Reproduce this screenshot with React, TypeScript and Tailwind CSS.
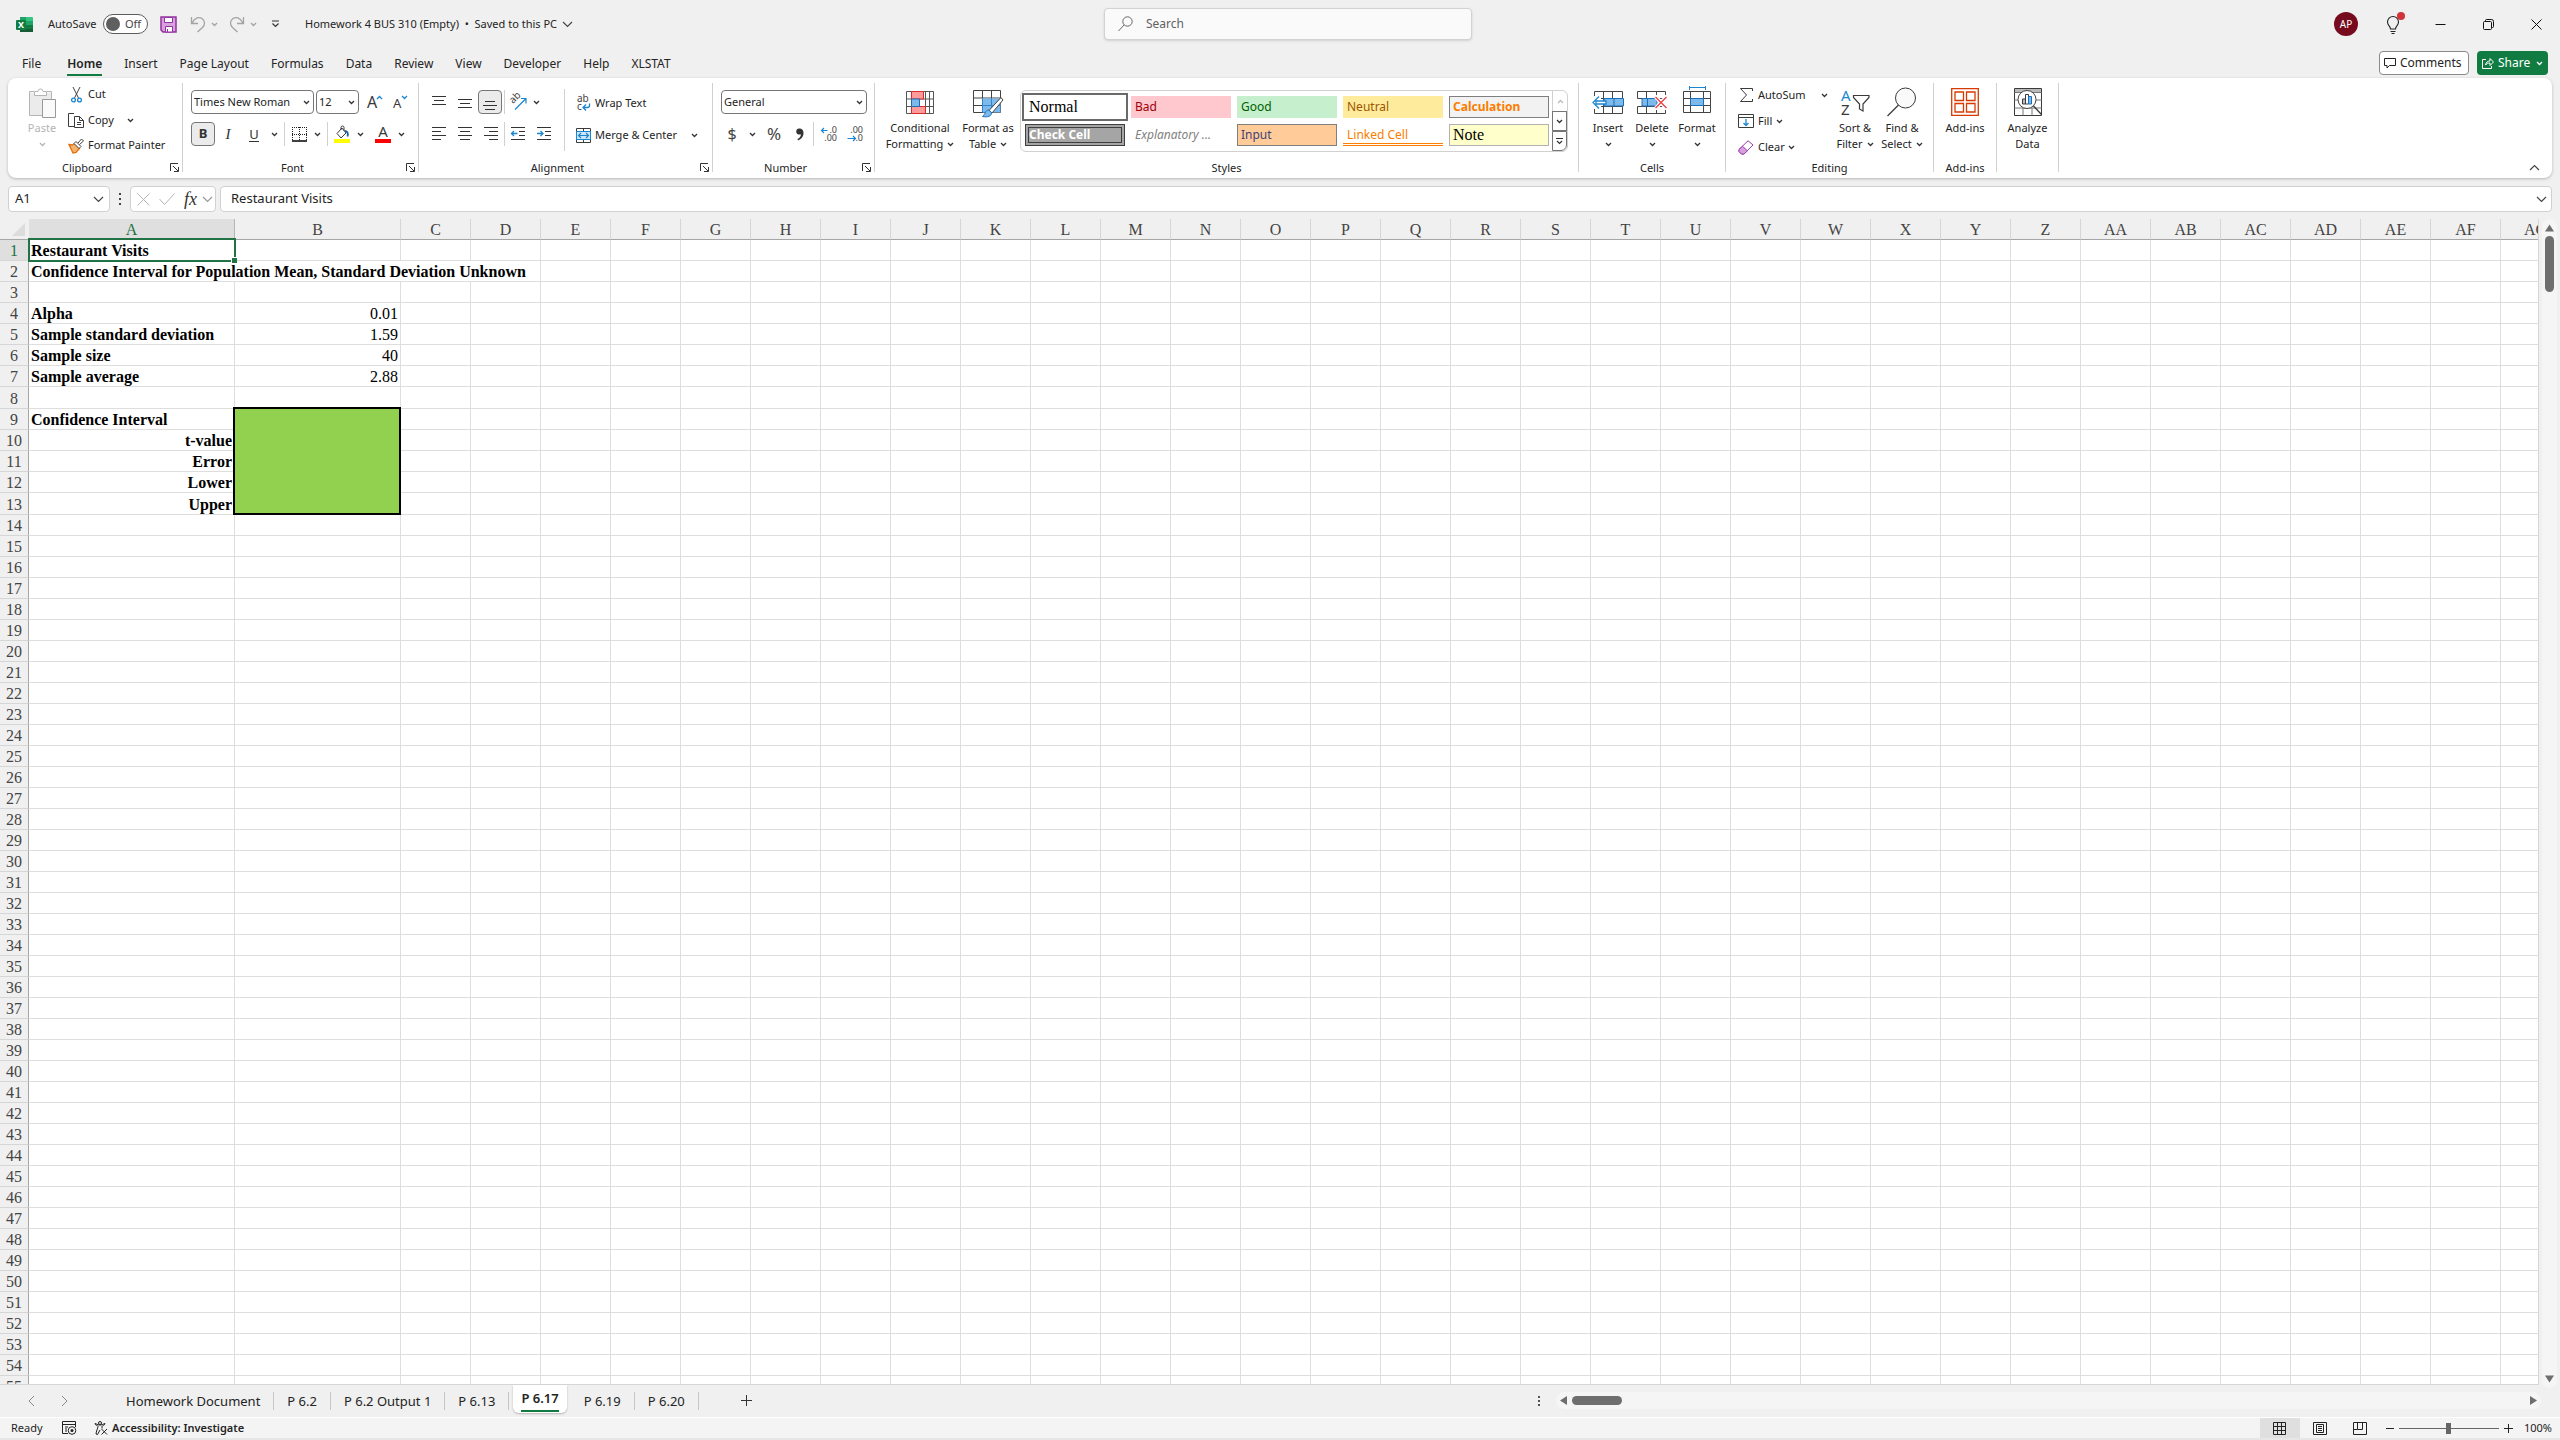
import React from 'react';

interface CellData {
  text: string;
  bold?: boolean;
  right?: boolean;
  span?: number;
}

const TABS = ['File', 'Home', 'Insert', 'Page Layout', 'Formulas', 'Data', 'Review', 'View', 'Developer', 'Help', 'XLSTAT'];

const COLUMNS = Array.from({ length: 33 }, (_, i) =>
  i < 26 ? String.fromCharCode(65 + i) : 'A' + String.fromCharCode(65 + i - 26)
);
const ROWS = Array.from({ length: 55 }, (_, i) => i + 1);
const TALL_ROWS = [8, 13];
const INPUT_ROWS = [9, 10, 11, 12, 13];

const CELLS: Record<string, CellData> = {
  A1: { text: 'Restaurant Visits', bold: true },
  A2: { text: 'Confidence Interval for Population Mean, Standard Deviation Unknown', bold: true, span: 4 },
  A4: { text: 'Alpha', bold: true },
  B4: { text: '0.01', right: true },
  A5: { text: 'Sample standard deviation', bold: true },
  B5: { text: '1.59', right: true },
  A6: { text: 'Sample size', bold: true },
  B6: { text: '40', right: true },
  A7: { text: 'Sample average', bold: true },
  B7: { text: '2.88', right: true },
  A9: { text: 'Confidence Interval', bold: true },
  A10: { text: 't-value', bold: true, right: true },
  A11: { text: 'Error', bold: true, right: true },
  A12: { text: 'Lower', bold: true, right: true },
  A13: { text: 'Upper', bold: true, right: true },
};

interface IconProps {
  w: number;
  h: number;
  className?: string;
  children: React.ReactNode;
}

const Icon: React.FC<IconProps> = ({ w, h, className = '', children }) => (
  <svg width={w} height={h} viewBox={`0 0 ${w} ${h}`} fill="none" stroke="#3b3b3b" className={`shrink-0 overflow-visible ${className}`} aria-hidden="true">
    {children}
  </svg>
);

const Chevron: React.FC<{ color?: string }> = ({ color = '#333' }) => (
  <Icon w={7} h={5}>
    <path d="M1 1l2.500 2.500L6 1" stroke={color} strokeWidth="1.300" />
  </Icon>
);

const BigChevron: React.FC<{ color?: string; up?: boolean }> = ({ color = '#444', up }) => (
  <Icon w={11} h={7} className={up ? 'rotate-180' : ''}>
    <path d="M1 1l4.500 4.500L10 1" stroke={color} strokeWidth="1.200" />
  </Icon>
);

const Launcher: React.FC<{ label: string }> = ({ label }) => (
  <button aria-label={`${label} settings`} className="absolute right-[3px] bottom-[6px]">
    <Icon w={9} h={9}>
      <path d="M.5 8V.5H8M3 3l5 5M8.500 4v4.500H4" stroke="#333" />
    </Icon>
  </button>
);

interface GroupProps {
  label?: string;
  width: string;
  launcher?: boolean;
  children: React.ReactNode;
}

const Group: React.FC<GroupProps> = ({ label = '', width, launcher, children }) => (
  <>
    <section aria-label={label || 'Analysis'} className={`relative flex h-[100px] shrink-0 flex-col ${width}`}>
      <div className="flex h-[80px]">{children}</div>
      <div className={`h-[20px] text-center leading-[20px] ${launcher ? 'pr-4' : ''}`}>{label}</div>
      {launcher && <Launcher label={label} />}
    </section>
    <div className="mt-[5px] h-[89px] w-px shrink-0 bg-[#d1d1d1]" />
  </>
);

const Tool: React.FC<{ label: string; width?: string; active?: boolean; children: React.ReactNode }> = ({
  label,
  width = 'w-[26px]',
  active,
  children,
}) => (
  <button
    aria-label={label}
    className={`flex h-[24px] shrink-0 items-center justify-center ${active ? 'rounded border border-[#767676] bg-[#ebebeb]' : ''} ${width}`}
  >
    {children}
  </button>
);

const Drop: React.FC<{ label: string; width?: string }> = ({ label, width = 'w-[14px]' }) => (
  <Tool label={label} width={width}>
    <Chevron />
  </Tool>
);

const Separator = () => <div className="mx-[3px] h-[24px] w-px shrink-0 bg-[#d1d1d1]" />;

interface BigButtonProps {
  icon: React.ReactNode;
  lines: string[];
  width: string;
  chevron?: 'inline' | 'below';
  disabled?: boolean;
}

const BigButton: React.FC<BigButtonProps> = ({ icon, lines, width, chevron, disabled }) => (
  <button
    disabled={disabled}
    className={`flex h-[80px] shrink-0 flex-col items-center pt-[6px] leading-[16px] whitespace-nowrap ${disabled ? 'text-[#b5b5b5]' : ''} ${width}`}
  >
    <span className="flex h-[36px] items-center">{icon}</span>
    {lines.map((line, i) => (
      <span key={line} className="flex items-center gap-1">
        {line}
        {chevron === 'inline' && i === lines.length - 1 && <Chevron />}
      </span>
    ))}
    {chevron === 'below' && (
      <span className="flex h-[16px] items-center">
        <Chevron color={disabled ? '#b5b5b5' : '#333'} />
      </span>
    )}
  </button>
);

const SmallButton: React.FC<{ icon: React.ReactNode; text: string }> = ({ icon, text }) => (
  <button className="flex h-[26px] items-center gap-1 whitespace-nowrap">
    <span className="flex w-[16px] justify-center">{icon}</span>
    {text}
  </button>
);

/* horizontal rules used by the six alignment buttons */
const Lines: React.FC<{ d: string }> = ({ d }) => (
  <Icon w={14} h={14}>
    <path d={d} stroke="#333" />
  </Icon>
);

const TitleBar = () => (
  <header className="flex h-[48px] items-center pl-4 text-[11px]">
    <div className="flex flex-1 items-center whitespace-nowrap">
      <svg width="17" height="17" viewBox="0 0 17 17" aria-label="Excel">
        <path d="M4 1h6v5H4z" fill="#21a366" />
        <path d="M10 1h6a1 1 0 011 1v4h-7z" fill="#33c481" />
        <path d="M4 5h6v4H4z" fill="#107c41" />
        <path d="M10 5h7v4h-7z" fill="#21a366" />
        <path d="M4 9h6v4H4z" fill="#185c37" />
        <path d="M10 9h7v4h-7z" fill="#107c41" />
        <path d="M4 13h13v3H4z" fill="#185c37" />
        <rect y="4" width="10" height="10" rx="1" fill="#107c41" />
        <text x="5" y="12" textAnchor="middle" fill="#fff" className="text-[9px] font-bold">X</text>
      </svg>
      <span className="ml-[15px] w-[52px]">AutoSave</span>
      <button role="switch" aria-checked="false" aria-label="AutoSave" className="ml-[3px] flex h-[20px] w-[45px] items-center rounded-full border border-[#5c5c5c] bg-white px-[2px]">
        <span className="h-[14px] w-[14px] rounded-full bg-[#5f5f5f]" />
        <span className="ml-[5px] text-[#444]">Off</span>
      </button>
      <button aria-label="Save" className="ml-[12px]">
        <Icon w={17} h={17}>
          <path d="M1 1h15v15H3l-2-2z" fill="#d9a0de" stroke="#9332a0" strokeWidth="1.500" />
          <path d="M4.500 1.500h8v5h-8z" fill="#fff" stroke="#9332a0" />
          <path d="M5.500 10.500h7V16h-7z" fill="#fff" stroke="#9332a0" />
          <path d="M7.500 13v3" stroke="#9332a0" />
        </Icon>
      </button>
      <button aria-label="Undo" className="ml-[13px] flex items-center gap-[5px]">
        <Icon w={16} h={17}>
          <path d="M1.500 1v6.500H8M2 7C5 1.500 9 .5 12 2.500c3.500 2.500 3 6.500.5 9L7.500 16" stroke="#a3a3a3" strokeWidth="1.300" />
        </Icon>
        <Chevron color="#a3a3a3" />
      </button>
      <button aria-label="Redo" className="ml-[11px] flex items-center gap-[5px]">
        <Icon w={16} h={17}>
          <path d="M14.500 1v6.500H8M14 7C11 1.500 7 .5 4 2.500.5 5 1 9 3.500 11.500l5 4.500" stroke="#a3a3a3" strokeWidth="1.300" />
        </Icon>
        <Chevron color="#a3a3a3" />
      </button>
      <button aria-label="Customize Quick Access Toolbar" className="ml-[14px]">
        <Icon w={9} h={8}>
          <path d="M1 1h7M1.500 3.500l3 3 3-3" stroke="#333" strokeWidth="1.200" />
        </Icon>
      </button>
      <button className="ml-[25px] flex items-center gap-[5px]">
        Homework 4 BUS 310 (Empty)&nbsp; • &nbsp;Saved to this PC
        <BigChevron />
      </button>
    </div>
    <label className="flex h-[32px] w-[368px] items-center rounded-[4px] border border-[#d2d2d2] bg-[#fafafa] pl-[13px] shadow-sm">
      <Icon w={15} h={16}>
        <circle cx="9.500" cy="5.500" r="4.700" stroke="#666" />
        <path d="M6 9l-5.500 6" stroke="#666" />
      </Icon>
      <input aria-label="Search" placeholder="Search" className="ml-[13px] min-w-0 flex-1 bg-transparent text-[12px] outline-none placeholder:text-[#616161]" />
    </label>
    <div className="flex flex-1 items-center justify-end">
      <button className="h-[24px] w-[24px] rounded-full bg-[#750b1c] text-[10px] text-white">AP</button>
      <button aria-label="What's new" className="mr-[10px] ml-[24px] flex w-[24px] justify-center">
        <Icon w={24} h={24}>
          <path d="M8.500 17c0-3-3-3.500-3-7a5.500 5.500 0 0111 0c0 3.500-3 4-3 7zM8.500 19.500h5M9.500 21.500h3" stroke="#222" strokeWidth="1.100" />
          <circle cx="19" cy="4" r="4" fill="#d13438" stroke="none" />
        </Icon>
      </button>
      <button aria-label="Minimize" className="flex w-[48px] justify-center">
        <Icon w={11} h={11}><path d="M.5 5.500h10" stroke="#111" /></Icon>
      </button>
      <button aria-label="Restore" className="flex w-[48px] justify-center">
        <Icon w={11} h={11}>
          <rect x=".5" y="2.500" width="8" height="8" rx="1" stroke="#111" />
          <path d="M2.500 2V1.500a1 1 0 011-1h5a2 2 0 012 2v5a1 1 0 01-1 1H9" stroke="#111" />
        </Icon>
      </button>
      <button aria-label="Close" className="flex w-[48px] justify-center">
        <Icon w={11} h={11}><path d="M.5.5l10 10M10.500.5l-10 10" stroke="#111" /></Icon>
      </button>
    </div>
  </header>
);

const TabBar = () => (
  <div className="flex h-[30px] items-center pr-[12px] pl-[11px] text-[12px]">
    <nav className="flex h-full flex-1 whitespace-nowrap">
      {TABS.map((tab) => (
        <button key={tab} className={`flex h-[28px] items-end px-[11px] ${tab === 'File' ? 'mr-1' : ''}`}>
          <span className={`h-[25px] leading-[25px] ${tab === 'Home' ? 'border-b-2 border-[#107c41] font-semibold' : ''}`}>{tab}</span>
        </button>
      ))}
    </nav>
    <button className="flex h-[24px] w-[90px] items-center gap-[4px] rounded border border-[#8a8a8a] bg-white pl-[4px]">
      <Icon w={12} h={11}>
        <path d="M.5.5h11v7H5.500L3 10V7.500H.5z" stroke="#222" />
      </Icon>
      Comments
    </button>
    <button className="ml-2 flex h-[24px] w-[71px] items-center gap-[4px] rounded bg-[#107c41] pl-[5px] text-white">
      <Icon w={12} h={12}>
        <path d="M4 2.500H.5v9h9V9M3.500 8C4 5.500 5.500 4 8 4V1.500L11.500 5 8 8.500V6C6 6 4.500 6.500 3.500 8z" stroke="#fff" />
      </Icon>
      Share
      <span className="ml-[2px] flex"><Chevron color="#fff" /></span>
    </button>
  </div>
);

const ClipboardGroup = () => (
  <Group label="Clipboard" width="w-[174px]" launcher>
    <div className="flex pl-[12px]">
      <BigButton
        width="w-[44px]"
        lines={['Paste']}
        chevron="below"
        disabled
        icon={
          <Icon w={28} h={31}>
            <path d="M2 5.500h21v23H2z" fill="#ebebeb" stroke="none" />
            <path d="M6 4.500H1.500v24H14M19 4.500h4.500V12" stroke="#b5b5b5" />
            <path d="M6.500 8.500v-4H10a2.500 2.500 0 015 0h3.500v4z" fill="#fff" stroke="#b5b5b5" />
            <path d="M14.500 12.500h13v18h-13z" fill="#fafafa" stroke="#999" />
          </Icon>
        }
      />
      <div className="flex flex-col pt-[4px] pl-[4px]">
        <SmallButton
          text="Cut"
          icon={
            <Icon w={11} h={16}>
              <path d="M2 0l5.500 11M9 0L3.500 11" stroke="#444" />
              <circle cx="2.500" cy="13" r="1.900" stroke="#1a86d0" strokeWidth="1.300" />
              <circle cx="8.500" cy="13" r="1.900" stroke="#1a86d0" strokeWidth="1.300" />
            </Icon>
          }
        />
        <div className="flex items-center">
          <SmallButton
            text="Copy"
            icon={
              <Icon w={16} h={15}>
                <path d="M6 13.500H.5V.5H6" />
                <path d="M6.500 3.500h5l4 4v7h-9z" fill="#fff" />
                <path d="M11.500 3.500v4h4M9 9.500h4M9 11.500h4" />
              </Icon>
            }
          />
          <span className="ml-[10px]"><Drop label="Copy options" /></span>
        </div>
        <SmallButton
          text="Format Painter"
          icon={
            <Icon w={16} h={16}>
              <path d="M1 6.500l3 .5 3-1.500 4.500 5L8 14.500 5 15z" fill="#f7b26a" stroke="#e07112" strokeWidth="1.300" />
              <path d="M6 5.500l2-2 5 5-2 2zM10 5l3.500-4 2 2-4 3.500" fill="#fff" stroke="#444" />
            </Icon>
          }
        />
      </div>
    </div>
  </Group>
);

const FontGroup = () => (
  <Group label="Font" width="w-[235px]" launcher>
    <div className="flex flex-col gap-2 pt-[12px] pl-[8px]">
      <div className="flex">
        <div className="flex h-[24px] w-[123px] items-center rounded border border-[#767676] bg-white pr-[3px]">
          <input aria-label="Font name" defaultValue="Times New Roman" className="min-w-0 flex-1 pl-[2px] outline-none" />
          <Chevron />
        </div>
        <div className="ml-[2px] mr-[2px] flex h-[24px] w-[43px] items-center rounded border border-[#767676] bg-white pr-[3px]">
          <input aria-label="Font size" defaultValue="12" className="min-w-0 flex-1 pl-[2px] outline-none" />
          <Chevron />
        </div>
        <Tool label="Increase font size">
          <Icon w={15} h={14}>
            <text x="0" y="13" fill="#3b3b3b" stroke="none" className="text-[16px]">A</text>
            <path d="M10 4l2.500-2.500L15 4" stroke="#1a86d0" strokeWidth="1.300" />
          </Icon>
        </Tool>
        <Tool label="Decrease font size">
          <Icon w={14} h={14}>
            <text x="0" y="13" fill="#3b3b3b" stroke="none" className="text-[13px]">A</text>
            <path d="M9 1l2.500 2.500L14 1" stroke="#1a86d0" strokeWidth="1.300" />
          </Icon>
        </Tool>
      </div>
      <div className="flex">
        <Tool label="Bold" width="w-[24px]" active><b className="text-[13px] text-[#333]">B</b></Tool>
        <Tool label="Italic"><i className="font-['Liberation_Serif',serif] text-[15px] text-[#333]">I</i></Tool>
        <Tool label="Underline"><span className="border-b border-[#333] text-[13px] leading-[14px] text-[#333]">U</span></Tool>
        <Drop label="Underline style" />
        <Separator />
        <Tool label="Borders" width="w-[22px]">
          <Icon w={15} h={15}>
            <path d="M.5 0v14M7.500 0v14M14.500 0v14M0 .5h15M0 7.500h15" stroke="#222" strokeDasharray="1 1" />
            <path d="M0 14h15" stroke="#000" strokeWidth="1.500" />
          </Icon>
        </Tool>
        <Drop label="Border options" />
        <Separator />
        <Tool label="Fill color" width="w-[22px]">
          <Icon w={16} h={17}>
            <path d="M3 7.500L8 2l4 5-5 5z" fill="#fff" />
            <path d="M7 4V1.500a1.500 1.500 0 013 0V5" />
            <path d="M11 5c2.500.5 3.500 2 2.500 5.500" stroke="#1762a5" strokeWidth="1.800" />
            <path d="M0 13h16v4H0z" fill="#ff0" stroke="none" />
          </Icon>
        </Tool>
        <Drop label="Fill color options" />
        <span className="ml-[5px]">
          <Tool label="Font color" width="w-[22px]">
            <Icon w={16} h={17}>
              <text x="8" y="11" textAnchor="middle" fill="#3b3b3b" stroke="none" className="text-[15px]">A</text>
              <path d="M0 13h16v4H0z" fill="#f00" stroke="none" />
            </Icon>
          </Tool>
        </span>
        <Drop label="Font color options" />
      </div>
    </div>
  </Group>
);

const AlignmentGroup = () => (
  <Group label="Alignment" width="w-[293px]" launcher>
    <div className="flex w-[138px] flex-col gap-2 pt-[12px] pl-[7px]">
      <div className="flex">
        <Tool label="Top align"><Lines d="M0 1.500h14M2 5.500h10M0 9.500h14" /></Tool>
        <Tool label="Middle align"><Lines d="M0 4.500h14M2 8.500h10M0 12.500h14" /></Tool>
        <Tool label="Bottom align" width="w-[24px]" active><Lines d="M2 6.500h10M0 10.500h14M2 14.500h10" /></Tool>
        <div className="ml-[2px] h-[24px] w-px bg-[#d1d1d1]" />
        <Tool label="Orientation">
          <Icon w={17} h={16}>
            <text x="3" y="10" transform="rotate(-45 3 10)" fill="#444" stroke="none" className="text-[10px]">ab</text>
            <path d="M5 15.500L15.500 5M11 4.500h5v5" stroke="#1a86d0" strokeWidth="1.200" />
          </Icon>
        </Tool>
        <Drop label="Orientation options" width="w-[10px]" />
      </div>
      <div className="flex">
        <Tool label="Align left"><Lines d="M0 .5h14M0 4.500h9M0 8.500h14M0 12.500h9" /></Tool>
        <Tool label="Center"><Lines d="M0 .5h14M2 4.500h10M0 8.500h14M2 12.500h10" /></Tool>
        <Tool label="Align right"><Lines d="M0 .5h14M5 4.500h9M0 8.500h14M5 12.500h9" /></Tool>
        <div className="h-[24px] w-px bg-[#d1d1d1]" />
        <Tool label="Decrease indent">
          <Icon w={15} h={14}>
            <path d="M0 .5h14M8 4.500h6M8 8.500h6M0 12.500h14" stroke="#333" />
            <path d="M6.500 6.500h-6M3 4L.5 6.500 3 9" stroke="#1a86d0" strokeWidth="1.300" />
          </Icon>
        </Tool>
        <Tool label="Increase indent">
          <Icon w={15} h={14}>
            <path d="M0 .5h14M8 4.500h6M8 8.500h6M0 12.500h14" stroke="#333" />
            <path d="M0 6.500h6M3.500 4L6 6.500 3.500 9" stroke="#1a86d0" strokeWidth="1.300" />
          </Icon>
        </Tool>
      </div>
    </div>
    <div className="mt-[11px] ml-[7px] h-[62px] w-px bg-[#d1d1d1]" />
    <div className="flex flex-col gap-[6px] pt-[12px] pl-[10px]">
      <SmallButton
        text="Wrap Text"
        icon={
          <Icon w={15} h={16}>
            <text x="1" y="7" fill="#444" stroke="none" className="text-[10px]">ab</text>
            <text x="1" y="15" fill="#444" stroke="none" className="text-[10px]">c</text>
            <path d="M13.500 8.500v2a2 2 0 01-2 2H7.500M10 9.500l-3 3 3 3" stroke="#1a86d0" strokeWidth="1.300" />
          </Icon>
        }
      />
      <div className="flex items-center">
        <SmallButton
          text="Merge & Center"
          icon={
            <Icon w={15} h={15}>
              <path d="M.5.5h14v14H.5zM7.500.5v3M7.500 11.500v3" />
              <path d="M.5 3.500h14v8H.5z" fill="#cfe6f8" stroke="#1a86d0" />
              <path d="M2.500 7.500h10M5 5L2.500 7.500 5 10M10 5l2.500 2.500L10 10" stroke="#1a86d0" strokeWidth="1.200" />
            </Icon>
          }
        />
        <span className="ml-[10px]"><Drop label="Merge options" /></span>
      </div>
    </div>
  </Group>
);

const NumberGroup = () => (
  <Group label="Number" width="w-[161px]" launcher>
    <div className="flex flex-col gap-2 pt-[12px] pl-[8px]">
      <div className="flex h-[24px] w-[146px] items-center rounded border border-[#767676] bg-white pr-[3px]">
        <select aria-label="Number format" className="min-w-0 flex-1 appearance-none pl-[2px] outline-none">
          <option>General</option>
        </select>
        <Chevron />
      </div>
      <div className="flex text-[#444]">
        <Tool label="Accounting format" width="w-[22px]"><span className="text-[16px]">$</span></Tool>
        <Drop label="Currency options" width="w-[18px]" />
        <Tool label="Percent style"><span className="text-[17px]">%</span></Tool>
        <Tool label="Comma style">
          <Icon w={8} h={13}>
            <path d="M3.500.5a3 3 0 00-.5 6c1 .2 1.700 0 2 0-.3 2-1.500 3.500-3.500 4.500l.5 1.500C6 11 7.500 8 7.500 5c0-3-1.500-4.500-4-4.500z" fill="#333" stroke="none" />
          </Icon>
        </Tool>
        <div className="mr-[2px] h-[24px] w-px bg-[#d1d1d1]" />
        <Tool label="Increase decimal">
          <Icon w={16} h={15}>
            <path d="M6.500 3.500h-6M3 1L.5 3.500 3 6" stroke="#1a86d0" strokeWidth="1.200" />
            <text x="16" y="6" textAnchor="end" fill="#444" stroke="none" className="text-[9px]">.0</text>
            <text x="16" y="14" textAnchor="end" fill="#444" stroke="none" className="text-[9px]">.00</text>
          </Icon>
        </Tool>
        <Tool label="Decrease decimal">
          <Icon w={16} h={15}>
            <path d="M.5 11.500h8M6 9l2.500 2.500L6 14" stroke="#1a86d0" strokeWidth="1.200" />
            <text x="16" y="6" textAnchor="end" fill="#444" stroke="none" className="text-[9px]">.00</text>
            <text x="16" y="14" textAnchor="end" fill="#444" stroke="none" className="text-[9px]">.0</text>
          </Icon>
        </Tool>
      </div>
    </div>
  </Group>
);

const STYLE_CELLS = [
  { name: 'Normal', className: "bg-white pl-[4px] text-black outline-2 outline-offset-1 outline-[#6a6a6a] font-['Liberation_Serif',serif] text-[16px]" },
  { name: 'Bad', className: 'bg-[#ffc7ce] pl-[4px] text-[#9c0006]' },
  { name: 'Good', className: 'bg-[#c6efce] pl-[4px] text-[#006100]' },
  { name: 'Neutral', className: 'bg-[#ffeb9c] pl-[4px] text-[#9c5700]' },
  { name: 'Calculation', className: 'border border-[#7f7f7f] bg-[#f2f2f2] pl-[3px] font-bold text-[#fa7d00]' },
  { name: 'Check Cell', className: 'border-4 border-double border-[#3f3f3f] bg-[#a5a5a5] font-bold text-white' },
  { name: 'Explanatory ...', className: 'pl-[4px] text-[#7f7f7f] italic' },
  { name: 'Input', className: 'border border-[#7f7f7f] bg-[#ffcc99] pl-[3px] text-[#3f3f76]' },
  { name: 'Linked Cell', className: 'border-b-3 border-double border-[#ff8001] pt-[3px] pl-[4px] text-[#fa7d00]' },
  { name: 'Note', className: "border border-[#b2b2b2] bg-[#ffffcc] pl-[3px] text-black font-['Liberation_Serif',serif] text-[16px]" },
];

const StylesGroup = () => (
  <Group label="Styles" width="w-[703px]">
    <div className="flex pl-[8px]">
      <BigButton
        width="w-[74px]"
        lines={['Conditional', 'Formatting']}
        chevron="inline"
        icon={
          <Icon w={28} h={23}>
            <path d="M.5.500h27v22H.5zM.5 8h27M.5 15.500h27M5.500.5v22M19.500.5v22M23.500.5v22" fill="#fff" stroke="#555" />
            <path d="M5.500.5h12V8h-12zM5.500 15.500h14v7h-14z" fill="#ff9a9a" stroke="#d92b2b" />
            <path d="M5.500 8h8v7.500h-8z" fill="#7db9ea" stroke="#1a6fb8" />
          </Icon>
        }
      />
      <BigButton
        width="w-[62px]"
        lines={['Format as', 'Table']}
        chevron="inline"
        icon={
          <Icon w={30} h={28} className="mt-[4px]">
            <path d="M.5.500h27v22H.5zM.5 8h27M.5 15.500h27M9.500.5v22M18.500.5v22" fill="#fff" stroke="#444" />
            <path d="M10 8.500h17.500v14H10z" fill="#7db9ea" stroke="none" />
            <path d="M9.500 8v14.500M18.500 8v14.500M10 15.500h17" stroke="#2f86cc" />
            <path d="M28 7.500L16 20.500l3 2.500L30 10z" fill="#fff" stroke="#444" />
            <path d="M15.500 20c-3 0-3 4-6 6.500 5 1 9 0 9-4z" fill="#7db9ea" stroke="#1a6fb8" />
          </Icon>
        }
      />
      <div className="mt-[12px] ml-px flex h-[62px] w-[548px] rounded-md border border-[#d1d1d1]">
        <div className="grid flex-1 auto-rows-[22px] grid-cols-[repeat(5,100px)] gap-[6px] pt-[5px] pl-[4px]">
          {STYLE_CELLS.map((s) => (
            <button key={s.name} className={`flex h-[22px] items-center text-left text-[12px] whitespace-nowrap ${s.className}`}>
              {s.name}
            </button>
          ))}
        </div>
        <div className="flex w-[15px] flex-col">
          <button aria-label="Scroll styles up" className="flex h-[20px] items-center justify-center border-l border-[#d1d1d1]">
            <span className="flex rotate-180"><Chevron color="#bbb" /></span>
          </button>
          <button aria-label="Scroll styles down" className="flex h-[20px] items-center justify-center border border-[#767676]">
            <Chevron />
          </button>
          <button aria-label="More styles" className="flex h-[20px] items-center justify-center rounded-br-md border border-[#767676]">
            <Icon w={7} h={7}>
              <path d="M0 .5h7M1 3l2.500 2.500L6 3" stroke="#333" strokeWidth="1.200" />
            </Icon>
          </button>
        </div>
      </div>
    </div>
  </Group>
);

const CellsGroup = () => (
  <Group label="Cells" width="w-[146px]">
    <div className="flex pl-[7px]">
      <BigButton
        width="w-[44px]"
        lines={['Insert']}
        chevron="below"
        icon={
          <Icon w={32} h={23}>
            <path d="M2.500 7V.5h28V22.500h-28V16M11.500.5v22M20.500.5v22M2 7.500h29M2 15.500h29" stroke="#444" />
            <path d="M12 7.500h19.500v7.500H12z" fill="#7db9ea" stroke="#1a6fb8" />
            <path d="M22 7.500V15" stroke="#1a6fb8" />
            <path d="M0 5h9v13H0z" fill="#fff" stroke="none" />
            <path d="M14 10v3H4v-3zM7 5.500L1 11.500l6 6" fill="#fff" stroke="#1a86d0" strokeWidth="1.300" />
          </Icon>
        }
      />
      <BigButton
        width="w-[44px]"
        lines={['Delete']}
        chevron="below"
        icon={
          <Icon w={30} h={23}>
            <path d="M.5 7.500V.5h28v7H.5M.5 15.500v7h28v-7H.5M9.500.5v7M19.500.5v7M9.500 15.500v7M19.500 15.500v7" stroke="#444" />
            <path d="M5 7.500h15v7.500H5z" fill="#7db9ea" stroke="#1a6fb8" />
            <path d="M10.500 7.500V15" stroke="#1a6fb8" />
            <path d="M18 5l12 13M30 5L18 18" stroke="#fff" strokeWidth="4" />
            <path d="M18.500 6l11 11M29.500 6l-11 11" stroke="#ee4444" strokeWidth="1.400" />
          </Icon>
        }
      />
      <BigButton
        width="w-[46px]"
        lines={['Format']}
        chevron="below"
        icon={
          <Icon w={29} h={28} className="-mt-1">
            <path d="M7 1.500h15M6.500 0v4M22.500 0v4" stroke="#1a86d0" />
            <path d="M.5 5.500h27v21H.5zM.5 12.500h27M.5 19.500h27M7.500 5.500v21M20.500 5.500v21" stroke="#444" />
            <path d="M7.500 12.500h13v7h-13z" fill="#7db9ea" stroke="#1a6fb8" />
          </Icon>
        }
      />
    </div>
  </Group>
);

const EditingGroup = () => (
  <Group label="Editing" width="w-[207px]">
    <div className="flex w-[105px] flex-col pt-[4px] pl-[12px]">
      <div className="flex items-center justify-between">
        <SmallButton
          text="AutoSum"
          icon={<Icon w={13} h={14}><path d="M12.500 3V.5H.5L6.500 7l-6 6.500h12V11" /></Icon>}
        />
        <Drop label="AutoSum options" />
      </div>
      <div className="flex items-center">
        <SmallButton
          text="Fill"
          icon={
            <Icon w={16} h={14}>
              <path d="M.5.5h15v13H.5zM.5 3.500h15" />
              <path d="M8 5v6.500M5.500 9L8 11.500 10.500 9" stroke="#1a86d0" strokeWidth="1.300" />
            </Icon>
          }
        />
        <Drop label="Fill options" />
      </div>
      <div className="flex items-center">
        <SmallButton
          text="Clear"
          icon={
            <Icon w={16} h={15}>
              <path d="M1 9.500L10 .8 15 5 6 14H3.500L1 11.500z" fill="#fff" stroke="#9b3fb0" />
              <path d="M1 9.500l3.500-3.200 5 4.500L6 14H3.500L1 11.500z" fill="#d9a0de" stroke="#9b3fb0" />
            </Icon>
          }
        />
        <Drop label="Clear options" />
      </div>
    </div>
    <BigButton
      width="w-[48px]"
      lines={['Sort &', 'Filter']}
      chevron="inline"
      icon={
        <Icon w={29} h={27}>
          <text x="0" y="12" fill="#1a86d0" stroke="none" className="text-[15px]">A</text>
          <text x="0" y="26" fill="#3b3b3b" stroke="none" className="text-[15px]">Z</text>
          <path d="M12.500 6.500h15.500v2l-6 6.500v7l-3.500-2v-5l-6-6.500z" strokeWidth="1.200" />
        </Icon>
      }
    />
    <BigButton
      width="w-[46px]"
      lines={['Find &', 'Select']}
      chevron="inline"
      icon={
        <Icon w={30} h={30}>
          <circle cx="18.500" cy="11" r="10" fill="#fafafa" />
          <path d="M11.500 18L.5 29" strokeWidth="1.200" />
        </Icon>
      }
    />
  </Group>
);

const Ribbon = () => (
  <div className="mx-2 flex h-[100px] items-start justify-between rounded-lg bg-white text-[11px] shadow-[0_1px_3px_rgba(0,0,0,0.25)]">
    <div className="flex">
      <ClipboardGroup />
      <FontGroup />
      <AlignmentGroup />
      <NumberGroup />
      <StylesGroup />
      <CellsGroup />
      <EditingGroup />
      <Group label="Add-ins" width="w-[62px]">
        <BigButton
          width="w-full"
          lines={['Add-ins']}
          icon={
            <Icon w={28} h={28}>
              <path d="M.7.700h26.600v26.600H.7zM4 4h8.500v8.500H4zM15.500 4H24v8.500h-8.500zM4 15.500h8.500V24H4zM15.500 15.500H24V24h-8.500z" stroke="#d83b01" strokeWidth="1.300" />
            </Icon>
          }
        />
      </Group>
      <Group width="w-[61px]">
        <BigButton
          width="w-full"
          lines={['Analyze', 'Data']}
          icon={
            <Icon w={28} h={28}>
              <path d="M.5.500h27v27H.5z" fill="#fff" />
              <path d="M1 1h26v3.500H1z" fill="#b9b9b9" stroke="none" />
              <path d="M.5 4.500h27M.5 12h27M.5 20h27M9 20v7.500M18 20v7.500" stroke="#777" />
              <circle cx="13" cy="11.500" r="9" fill="#fff" stroke="#444" />
              <path d="M8.500 11h3v5h-3z" fill="#bbb" />
              <path d="M11.500 6.500h3V16h-3z" fill="#fff" />
              <path d="M14.500 8.500h3V16h-3z" fill="#7db9ea" stroke="#1a6fb8" />
              <path d="M19.500 18l8 8.500" strokeWidth="1.300" />
            </Icon>
          }
        />
      </Group>
    </div>
    <button aria-label="Collapse ribbon" className="mt-[86px] mr-[12px]">
      <BigChevron up />
    </button>
  </div>
);

const FormulaBar = () => (
  <div className="flex h-[41px] items-center px-2 pt-px text-[12px]">
    <div className="flex h-[26px] w-[102px] items-center rounded border border-[#d1d1d1] bg-white pr-[5px]">
      <input aria-label="Name box" defaultValue="A1" className="min-w-0 flex-1 pl-[6px] text-[13px] outline-none" />
      <BigChevron />
    </div>
    <div className="mx-[9px] flex flex-col gap-[3px]">
      <span className="h-[2px] w-[2px] bg-[#444]" />
      <span className="h-[2px] w-[2px] bg-[#444]" />
      <span className="h-[2px] w-[2px] bg-[#444]" />
    </div>
    <div className="flex h-[26px] w-[86px] items-center rounded border border-[#d1d1d1] bg-white pl-[6px]">
      <button aria-label="Cancel">
        <Icon w={13} h={13}><path d="M.5.5l12 12M12.500.5l-12 12" stroke="#b5b5b5" /></Icon>
      </button>
      <button aria-label="Enter" className="ml-[9px]">
        <Icon w={16} h={12}><path d="M.5 6l5 5.500 10-11" stroke="#b5b5b5" /></Icon>
      </button>
      <button aria-label="Insert function" className="ml-[9px] font-['Liberation_Serif',serif] text-[18px] leading-[20px] text-[#333] italic">
        fx
      </button>
      <span className="ml-[5px]"><BigChevron color="#999" /></span>
    </div>
    <div className="ml-1 flex h-[26px] flex-1 items-center rounded border border-[#d1d1d1] bg-white pr-[4px]">
      <input aria-label="Formula bar" defaultValue="Restaurant Visits" className="min-w-0 flex-1 pl-[10px] text-[13px] outline-none" />
      <BigChevron />
    </div>
  </div>
);

const Sheet = () => (
  <div className="min-w-0 flex-1 overflow-hidden border-r border-b border-[#d6d6d6] bg-white">
    <table className="w-px table-fixed border-separate border-spacing-0 font-['Liberation_Serif',serif] text-[16px] leading-[18px] text-black">
      <colgroup>
        <col className="w-[29px]" />
        {COLUMNS.map((c) => (
          <col key={c} className={c === 'A' ? 'w-[206px]' : c === 'B' ? 'w-[166px]' : 'w-[70px]'} />
        ))}
      </colgroup>
      <thead>
        <tr className="h-[21px] bg-[#f0f0f0] text-[#444]">
          <th className="border-b border-[#a6a6a6] p-0">
            <svg width="13" height="13" viewBox="0 0 13 13" className="ml-[12px]" aria-hidden="true">
              <path d="M13 0v13H0z" fill="#dcdcdc" />
            </svg>
          </th>
          {COLUMNS.map((c) => (
            <th
              key={c}
              scope="col"
              className={`border-r border-b border-b-[#a6a6a6] px-0 pt-[2px] pb-0 font-normal ${c === 'A' ? 'border-r-[#b5b5b5] bg-[#dfdfdf] text-[#1e7145]' : 'border-r-[#d6d6d6]'}`}
            >
              {c}
            </th>
          ))}
        </tr>
      </thead>
      <tbody>
        {ROWS.map((row) => (
          <tr key={row} className={TALL_ROWS.includes(row) ? 'h-[22px]' : 'h-[21px]'}>
            <th
              scope="row"
              className={`border-r border-b border-r-[#a6a6a6] border-b-[#d6d6d6] px-0 pt-[2px] pb-0 font-normal ${row === 1 ? 'bg-[#dfdfdf] text-[#1e7145]' : 'bg-[#f0f0f0] text-[#444]'}`}
            >
              {row}
            </th>
            {COLUMNS.map((c, i) => {
              const id = c + row;
              const cell = CELLS[id];
              if (row === 2 && i > 0 && i < 4) return null;
              const input = c === 'B' && INPUT_ROWS.includes(row);
              return (
                <td
                  key={id}
                  colSpan={cell?.span}
                  className={`border-r border-b border-[#dedede] px-[2px] pt-[2px] pb-0 whitespace-nowrap ${cell?.bold ? 'font-bold' : ''} ${cell?.right ? 'text-right' : ''} ${id === 'A1' || id === 'B9' ? 'relative' : ''} ${input ? 'bg-[#92d050]' : ''}`}
                >
                  {cell?.text}
                  {id === 'A1' && (
                    <span className="pointer-events-none absolute -top-[2px] -right-[2px] -bottom-[2px] -left-px z-10 border-2 border-[#217346]">
                      <span className="absolute -right-[3px] -bottom-[3px] h-[6px] w-[6px] border-t border-l border-white bg-[#217346]" />
                    </span>
                  )}
                  {id === 'B9' && (
                    <span className="pointer-events-none absolute -top-[2px] -right-px -left-[2px] z-10 h-[108px] border-2 border-black bg-[#92d050]" />
                  )}
                </td>
              );
            })}
          </tr>
        ))}
      </tbody>
    </table>
  </div>
);

const VerticalScroll = () => (
  <div className="mx-[3px] -mb-[3px] flex w-[15px] flex-col items-center rounded-full bg-[#f5f5f5] py-[5px]">
    <button aria-label="Scroll up">
      <Icon w={9} h={8}><path d="M4.500.5L9 7.500H0z" fill="#6e6e6e" stroke="none" /></Icon>
    </button>
    <div className="mt-1 flex-1">
      <div className="h-[56px] w-[9px] rounded-full bg-[#6e6e6e]" />
    </div>
    <button aria-label="Scroll down">
      <Icon w={9} h={8}><path d="M4.500 7.500L9 .5H0z" fill="#6e6e6e" stroke="none" /></Icon>
    </button>
  </div>
);

const SHEETS = ['Homework Document', 'P 6.2', 'P 6.2 Output 1', 'P 6.13', 'P 6.17', 'P 6.19', 'P 6.20'];

const SheetTabs = () => (
  <div className="flex h-[32px] items-start pl-[28px] text-[13px]">
    <div className="flex h-full flex-1 items-start whitespace-nowrap">
      <button aria-label="Previous sheet" className="mt-[10px]">
        <Icon w={7} h={12}><path d="M6 1L1 6l5 5" stroke="#8a8a8a" /></Icon>
      </button>
      <button aria-label="Next sheet" className="mt-[10px] mr-[45px] ml-[26px]">
        <Icon w={7} h={12}><path d="M1 1l5 5-5 5" stroke="#8a8a8a" /></Icon>
      </button>
      {SHEETS.map((s) =>
        s === 'P 6.17' ? (
          <button key={s} className="mx-1 h-[28px] rounded-b-md bg-white px-2 shadow-[0_1px_2px_rgba(0,0,0,0.25)]">
            <span className="block h-[25px] border-b-2 border-[#107c41] leading-[23px] font-semibold">{s}</span>
          </button>
        ) : (
          <button key={s} className="mt-[7px] h-[18px] border-r border-[#c6c6c6] px-[13px] leading-[18px]">{s}</button>
        )
      )}
      <button aria-label="New sheet" className="mt-[10px] ml-[42px]">
        <Icon w={11} h={11}><path d="M5.500 0v11M0 5.500h11" stroke="#333" /></Icon>
      </button>
    </div>
    <div className="mt-[11px] mr-[16px] flex flex-col gap-[2px]">
      <span className="h-[2px] w-[2px] bg-[#555]" />
      <span className="h-[2px] w-[2px] bg-[#555]" />
      <span className="h-[2px] w-[2px] bg-[#555]" />
    </div>
    <div className="mt-[7px] mr-[19px] flex h-[17px] w-[985px] items-center rounded-full bg-[#f5f5f5] px-[4px]">
      <button aria-label="Scroll left">
        <Icon w={7} h={9}><path d="M0 4.500L7 0v9z" fill="#6e6e6e" stroke="none" /></Icon>
      </button>
      <div className="ml-[5px] flex-1">
        <div className="h-[9px] w-[50px] rounded-full bg-[#6e6e6e]" />
      </div>
      <button aria-label="Scroll right">
        <Icon w={7} h={9}><path d="M7 4.500L0 0v9z" fill="#6e6e6e" stroke="none" /></Icon>
      </button>
    </div>
  </div>
);

const StatusBar = () => (
  <footer className="flex h-[23px] items-center border-t border-b-2 border-t-white border-b-[#e6e6e6] bg-[#f4f4f4] pr-[8px] pl-[11px] text-[11px]">
    <div className="flex flex-1 items-center">
      <span className="w-[51px]">Ready</span>
      <button aria-label="Record macro">
        <Icon w={15} h={14}>
          <path d="M6 12.500H.5V.5h13V6M.5 3.500h13M3 6h3M3 8h2M3 10h2" stroke="#222" />
          <circle cx="10" cy="9.500" r="3.800" stroke="#222" />
          <circle cx="10" cy="9.500" r="1.500" fill="#222" stroke="none" />
        </Icon>
      </button>
      <button className="ml-[17px] flex items-center gap-1 font-semibold">
        <Icon w={14} h={14}>
          <circle cx="6" cy="2" r="1.500" stroke="#222" />
          <path d="M1 2.500c0 2 3 2 3 3S2 11 2 13l1.500.5L6 9M11 2.500c0 2-3 2-3 3v2M1 2.500l4 1.500h2l4-1.500M7.500 8l5.500 5.500M13 8l-5.500 5.500" stroke="#222" />
        </Icon>
        Accessibility: Investigate
      </button>
    </div>
    <button aria-label="Normal view" className="flex h-full w-[40px] items-center justify-center bg-[#dfdfdf]">
      <Icon w={13} h={13}><path d="M.5.5h12v12H.5zM4.500.5v12M8.500.5v12M.5 4.500h12M.5 8.500h12" stroke="#222" /></Icon>
    </button>
    <button aria-label="Page layout view" className="flex h-full w-[40px] items-center justify-center">
      <Icon w={14} h={13}><path d="M.5.500h13v12H.5zM3.500 2.500h7v8h-7zM5 4.500h4M5 6.500h4M5 8.500h4" stroke="#222" /></Icon>
    </button>
    <button aria-label="Page break preview" className="flex h-full w-[40px] items-center justify-center">
      <Icon w={14} h={13}><path d="M.5.500h13v12H.5zM4.500.5v7h5v-7M.5 7.500h4" stroke="#222" /></Icon>
    </button>
    <button aria-label="Zoom out" className="ml-[6px]">
      <Icon w={8} h={9}><path d="M0 4.500h8" stroke="#222" /></Icon>
    </button>
    <input
      type="range"
      aria-label="Zoom"
      min="10"
      max="190"
      defaultValue="100"
      className="mx-[5px] h-[11px] w-[100px] appearance-none bg-transparent [&::-webkit-slider-runnable-track]:h-px [&::-webkit-slider-runnable-track]:bg-[#666] [&::-webkit-slider-thumb]:-mt-[5px] [&::-webkit-slider-thumb]:h-[11px] [&::-webkit-slider-thumb]:w-[5px] [&::-webkit-slider-thumb]:appearance-none [&::-webkit-slider-thumb]:bg-[#666]"
    />
    <button aria-label="Zoom in">
      <Icon w={9} h={9}><path d="M4.500 0v9M0 4.500h9" stroke="#222" /></Icon>
    </button>
    <span className="ml-[11px]">100%</span>
  </footer>
);

const App: React.FC = () => {
  return (
    <div className="flex h-screen flex-col overflow-hidden bg-[#f0f0f0] font-['Noto_Sans','Open_Sans',sans-serif] text-[#242424]">
      <TitleBar />
      <TabBar />
      <Ribbon />
      <FormulaBar />
      <main className="flex min-h-0 flex-1">
        <Sheet />
        <VerticalScroll />
      </main>
      <SheetTabs />
      <StatusBar />
    </div>
  );
};

export default App;
